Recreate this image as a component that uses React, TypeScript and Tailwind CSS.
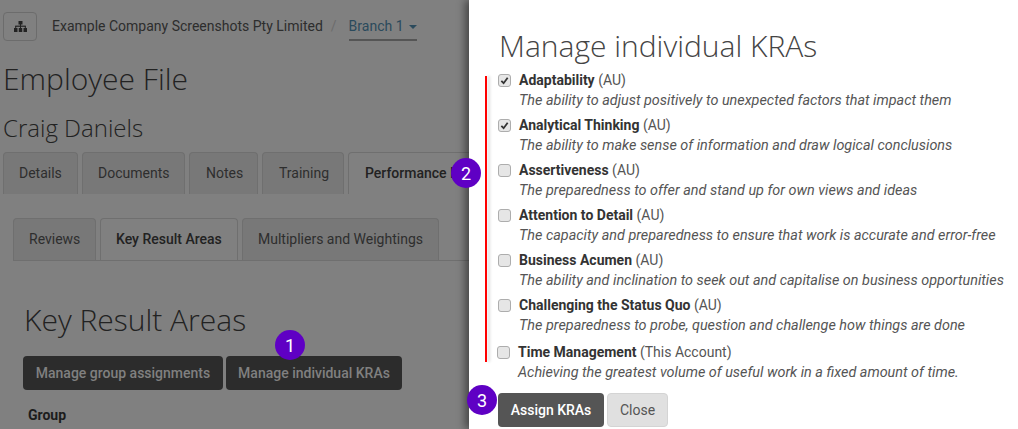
import React from 'react';

const roboto = { fontFamily: 'Roboto, sans-serif' };
const openSans = { fontFamily: '"Open Sans", sans-serif' };

const kras = [
  { name: 'Adaptability', src: '(AU)', desc: 'The ability to adjust positively to unexpected factors that impact them', checked: true },
  { name: 'Analytical Thinking', src: '(AU)', desc: 'The ability to make sense of information and draw logical conclusions', checked: true },
  { name: 'Assertiveness', src: '(AU)', desc: 'The preparedness to offer and stand up for own views and ideas', checked: false },
  { name: 'Attention to Detail', src: '(AU)', desc: 'The capacity and preparedness to ensure that work is accurate and error-free', checked: false },
  { name: 'Business Acumen', src: '(AU)', desc: 'The ability and inclination to seek out and capitalise on business opportunities', checked: false },
  { name: 'Challenging the Status Quo', src: '(AU)', desc: 'The preparedness to probe, question and challenge how things are done', checked: false },
];

const Badge: React.FC<{ n: number; className: string }> = ({ n, className }) => (
  <div className={`absolute z-20 w-[30px] h-[30px] rounded-full bg-[#5f00c4] text-white flex items-center justify-center text-[18px] ${className}`}>
    {n}
  </div>
);

const Check: React.FC<{ checked: boolean }> = ({ checked }) => (
  <span className="w-[13px] h-[13px] shrink-0 rounded-[3px] border border-[#adadad] bg-[#e6e6e6] flex items-center justify-center">
    {checked && (
      <svg width="9" height="9" viewBox="0 0 10 10">
        <path d="M1.5 5.5L4 8L8.5 2" fill="none" stroke="#333" strokeWidth="2" />
      </svg>
    )}
  </span>
);

const Tab: React.FC<{ label: string; active?: boolean; className: string }> = ({ label, active, className }) => (
  <div className={`h-[42px] shrink-0 rounded-t-[4px] border border-b-0 border-[#6f6f6f] flex items-center text-[14px] ${active ? 'bg-[#808080] text-[#222] font-medium' : 'bg-[#787878] text-[#2e2e2e]'} ${className}`}>
    {label}
  </div>
);

const App: React.FC = () => {
  return (
    <div className="relative w-[1018px] h-[429px] overflow-hidden flex bg-white" style={roboto}>
      {/* dimmed page behind the slide-over */}
      <div className="w-[469px] h-[429px] shrink-0 overflow-hidden bg-[#808080] pl-[3px] pt-[12px]">
        <div className="flex items-center h-[29px]">
          <div className="w-[34px] h-[29px] rounded-[4px] border border-[#6c6c6c] flex items-center justify-center">
            <svg width="13" height="11" viewBox="0 0 13 11" fill="#222">
              <rect x="4.5" y="0" width="4" height="3.5" />
              <rect x="0" y="7" width="3.5" height="4" />
              <rect x="4.75" y="7" width="3.5" height="4" />
              <rect x="9.5" y="7" width="3.5" height="4" />
              <rect x="1.2" y="4.6" width="10.6" height="1.2" />
              <rect x="6" y="3" width="1" height="4" />
              <rect x="1.2" y="5" width="1" height="2" />
              <rect x="10.8" y="5" width="1" height="2" />
            </svg>
          </div>
          <span className="ml-[15px] text-[14px] text-[#2d2d2d] whitespace-nowrap">Example Company Screenshots Pty Limited</span>
          <span className="ml-[8px] text-[14px] text-[#6c6c6c]">/</span>
          <div className="ml-[12px] h-[29px] pt-[2px] border-b-2 border-[#555] flex items-center text-[14px] text-[#2b4a5c] whitespace-nowrap">
            Branch 1
            <span className="ml-[5px] w-0 h-0 border-x-[4px] border-x-transparent border-t-[4px] border-t-[#2b4a5c]" />
          </div>
        </div>
        <h1 className="mt-[18px] text-[30px] leading-[40px] font-light text-[#222] whitespace-nowrap" style={openSans}>Employee File</h1>
        <h2 className="mt-[12px] text-[24px] leading-[33px] font-light text-[#222] whitespace-nowrap" style={openSans}>Craig Daniels</h2>
        <div className="mt-[8px] flex gap-[4px] w-[520px]">
          <Tab label="Details" className="w-[75px] pl-[15px]" />
          <Tab label="Documents" className="w-[103px] pl-[15px]" />
          <Tab label="Notes" className="w-[69px] pl-[16px]" />
          <Tab label="Training" className="w-[82px] pl-[16px]" />
          <Tab label="Performance Reviews" active className="w-[200px] pl-[16px] whitespace-nowrap" />
        </div>
        <div className="mt-[24px] ml-[10px] flex gap-[4px] w-[456px] border-b border-[#6f6f6f]">
          <Tab label="Reviews" className="w-[83px] pl-[15px]" />
          <Tab label="Key Result Areas" active className="w-[138px] pl-[15px]" />
          <Tab label="Multipliers and Weightings" className="w-[197px] pl-[15px]" />
        </div>
        <h2 className="mt-[38px] ml-[21px] text-[30px] leading-[42px] font-light text-[#222] whitespace-nowrap" style={openSans}>Key Result Areas</h2>
        <div className="mt-[15px] ml-[20px] flex gap-[3px]">
          <div className="w-[200px] h-[34px] rounded-[4px] bg-[#2c2c2c] text-[#808080] text-[14px] font-medium flex items-center justify-center whitespace-nowrap">Manage group assignments</div>
          <div className="w-[176px] h-[34px] rounded-[4px] bg-[#2c2c2c] text-[#808080] text-[14px] font-medium flex items-center justify-center whitespace-nowrap">Manage individual KRAs</div>
        </div>
        <div className="mt-[16px] ml-[25px] text-[14px] leading-[18px] font-bold text-[#1c1c1c]">Group</div>
      </div>

      {/* slide-over panel */}
      <div className="relative flex-1 pl-[29px] pt-[24px] shadow-[-4px_0_8px_rgba(0,0,0,0.45)]">
        <h1 className="ml-[1px] text-[30px] leading-[44px] font-light text-[#444] whitespace-nowrap" style={openSans}>Manage individual KRAs</h1>
        <div className="mt-[2px] flex flex-col">
          {kras.map(k => (
            <div key={k.name} className="h-[45px] flex items-start">
              <div className="pt-[4px]"><Check checked={k.checked} /></div>
              <div className="ml-[8px]">
                <div className="text-[14px] leading-[20px] text-[#555] whitespace-nowrap">
                  <span className="font-bold text-[#333]">{k.name}</span> {k.src}
                </div>
                <div className="mt-[1px] text-[14.4px] leading-[20px] italic text-[#555] whitespace-nowrap">{k.desc}</div>
              </div>
            </div>
          ))}
          <div className="h-[51px] -ml-[1px] mt-[2px] flex items-start">
            <div className="pt-[4px]"><Check checked={false} /></div>
            <div className="ml-[8px]">
              <div className="text-[14px] leading-[20px] text-[#555] whitespace-nowrap">
                <span className="font-bold text-[#333]">Time Management</span> (This Account)
              </div>
              <div className="mt-[1px] text-[14.4px] leading-[20px] italic text-[#555] whitespace-nowrap">Achieving the greatest volume of useful work in a fixed amount of time.</div>
            </div>
          </div>
        </div>
        <div className="flex gap-[3px]">
          <div className="w-[106px] h-[34px] rounded-[4px] bg-[#555] text-white text-[14px] font-medium flex items-center justify-center">Assign KRAs</div>
          <div className="w-[61px] h-[34px] rounded-[4px] bg-[#e0e0e0] border border-[#d4d4d4] text-[#555] text-[14px] flex items-center justify-center">Close</div>
        </div>
      </div>

      {/* annotations drawn on top of the screenshot */}
      <div className="absolute left-[485px] top-[76px] w-[2px] h-[286px] bg-[#f00] shadow-[3px_0_3px_rgba(0,0,0,0.15)]" />
      <Badge n={1} className="left-[275px] top-[330px]" />
      <Badge n={2} className="left-[451px] top-[158px]" />
      <Badge n={3} className="left-[467px] top-[385px]" />
    </div>
  );
};

export default App;
